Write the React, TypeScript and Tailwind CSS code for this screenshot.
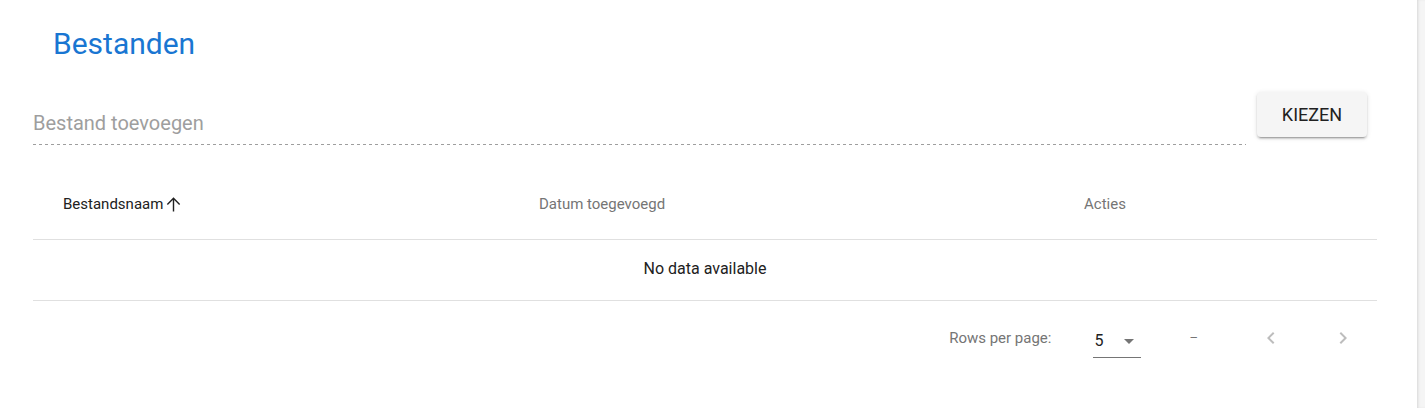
import React from 'react';

const ArrowUp: React.FC<React.SVGProps<SVGSVGElement>> = (props) => (
  <svg viewBox="0 0 18 18" fill="none" stroke="currentColor" strokeWidth={1.5} {...props}>
    <path d="M9 16.5V2.5M2.5 9L9 2.5 15.5 9" />
  </svg>
);

const Chevron: React.FC<{ dir: 'left' | 'right' }> = ({ dir }) => (
  <svg viewBox="0 0 24 24" fill="currentColor" className="w-6 h-6">
    {dir === 'left' ? (
      <path d="M15.41 16.58L10.83 12l4.58-4.59L14 6l-6 6 6 6 1.41-1.42z" />
    ) : (
      <path d="M8.59 16.58L13.17 12 8.59 7.41 10 6l6 6-6 6-1.41-1.42z" />
    )}
  </svg>
);

export default function App() {
  return (
    <div className="flex w-[1425px] h-[408px] bg-white" style={{ fontFamily: 'Roboto, "Liberation Sans", sans-serif' }}>
      <main className="flex-1 flex flex-col pl-[33px] pr-[40px]">
        <h1 className="pl-[20px] pt-[26px] text-[30px] leading-[36px] text-[#1976d2]">Bestanden</h1>

        <div className="flex items-start mt-[30px]">
          <div className="w-[1213px] pt-[10px]">
            <div className="h-[42px] flex items-center text-[20px] text-[#9e9e9e]">Bestand toevoegen</div>
            <div className="h-px bg-[linear-gradient(to_right,rgba(0,0,0,0.38)_0,rgba(0,0,0,0.38)_3px,transparent_3px)] bg-[length:6px_1px] bg-repeat-x"></div>
          </div>
          <button className="ml-[11px] w-[110px] h-[45px] bg-[#f5f5f5] rounded text-[18px] text-[#212121] shadow-[0_3px_1px_-2px_rgba(0,0,0,0.2),0_2px_2px_0_rgba(0,0,0,0.14),0_1px_5px_0_rgba(0,0,0,0.12)]">
            KIEZEN
          </button>
        </div>

        <div className="mt-[25px] w-[1344px]">
          <div className="flex items-center h-[70px] border-b border-[#e0e0e0] text-[15px]">
            <div className="w-[476px] pl-[30px] flex items-center text-[#212121]">
              Bestandsnaam
              <ArrowUp className="w-[17px] h-[17px] ml-[2px]" />
            </div>
            <div className="w-[545px] pl-[30px] text-[#757575]">Datum toegevoegd</div>
            <div className="flex-1 pl-[30px] text-[#757575]">Acties</div>
          </div>
          <div className="h-[61px] flex items-center justify-center border-b border-[#e0e0e0] text-[16px] text-[#212121] pb-[3px]">
            No data available
          </div>
          <div className="flex items-center h-[72px] pt-[2px]">
            <div className="flex-1"></div>
            <span className="text-[15px] text-[#757575]">Rows per page:</span>
            <div className="ml-[42px] w-[48px] flex items-center border-b border-[#757575] h-[36px] pt-[3px] mt-[3px]">
              <span className="text-[16px] text-[#212121] pl-[1px]">5</span>
              <svg viewBox="0 0 24 24" className="w-6 h-6 ml-[14px] text-[#757575]" fill="currentColor">
                <path d="M7 10l5 5 5-5z" />
              </svg>
            </div>
            <span className="ml-[48px] text-[13px] text-[#757575]">–</span>
            <div className="ml-[61px] text-[#bdbdbd]"><Chevron dir="left" /></div>
            <div className="ml-[48px] mr-[22px] text-[#bdbdbd]"><Chevron dir="right" /></div>
          </div>
        </div>
      </main>
      <aside className="w-[8px] bg-[#f5f5f5] shadow-[inset_2px_0_3px_-1px_rgba(0,0,0,0.12)]"></aside>
    </div>
  );
}
